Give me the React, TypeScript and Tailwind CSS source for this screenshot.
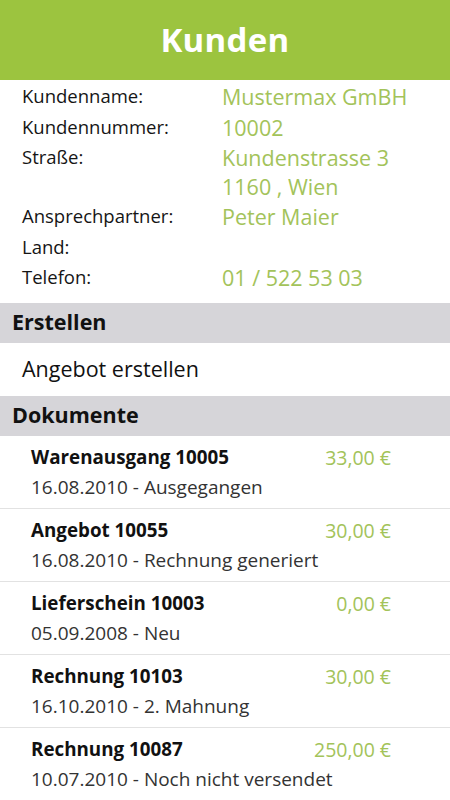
import React from "react";

const info = [
  { label: "Kundenname:", value: ["Mustermax GmBH"] },
  { label: "Kundennummer:", value: ["10002"] },
  { label: "Straße:", value: ["Kundenstrasse 3", "1160 , Wien"] },
  { label: "Ansprechpartner:", value: ["Peter Maier"] },
  { label: "Land:", value: [] as string[] },
  { label: "Telefon:", value: ["01 / 522 53 03"] },
];

const docs = [
  { title: "Warenausgang 10005", amount: "33,00 €", sub: "16.08.2010 - Ausgegangen" },
  { title: "Angebot 10055", amount: "30,00 €", sub: "16.08.2010 - Rechnung generiert" },
  { title: "Lieferschein 10003", amount: "0,00 €", sub: "05.09.2008 - Neu" },
  { title: "Rechnung 10103", amount: "30,00 €", sub: "16.10.2010 - 2. Mahnung" },
  { title: "Rechnung 10087", amount: "250,00 €", sub: "10.07.2010 - Noch nicht versendet" },
];

export default function App() {
  return (
    <div className="w-[450px] h-[800px] overflow-hidden bg-white font-['Open_Sans',sans-serif]">
      <div className="h-[80px] bg-[#9cc43f] flex items-center justify-center">
        <h1 className="text-[33px] font-bold text-white tracking-[0.3px]">Kunden</h1>
      </div>

      <div className="pl-[22px] pt-[1px] pb-[10px]">
        {info.map((r) => (
          <div key={r.label} className="flex min-h-[30.5px]">
            <div className="w-[200px] text-[18.5px] leading-[30.5px] text-[#151515]">{r.label}</div>
            <div className="text-[21.5px] leading-[29px] pt-[1px] text-[#a3c35a]">
              {r.value.map((v) => (
                <div key={v}>{v}</div>
              ))}
            </div>
          </div>
        ))}
      </div>

      <div className="h-[40px] bg-[#d6d5d9] flex items-center pl-[12px]">
        <span className="text-[21.5px] font-bold text-[#111]">Erstellen</span>
      </div>
      <div className="h-[53px] flex items-center pl-[22px]">
        <span className="text-[21.5px] text-[#111]">Angebot erstellen</span>
      </div>

      <div className="h-[40px] bg-[#d6d5d9] flex items-center pl-[12px]">
        <span className="text-[21.5px] font-bold text-[#111]">Dokumente</span>
      </div>
      <div>
        {docs.map((d) => (
          <div key={d.title + d.sub} className="h-[73px] border-b border-[#e2e2e2] pl-[31px] pr-[59px] pt-[8px]">
            <div className="flex justify-between items-center h-[28px]">
              <span className="text-[18.8px] font-bold text-[#111]">{d.title}</span>
              <span className="text-[19.5px] text-[#a3c35a]">{d.amount}</span>
            </div>
            <div className="text-[19px] leading-[31px] text-[#333]">{d.sub}</div>
          </div>
        ))}
      </div>
    </div>
  );
}
